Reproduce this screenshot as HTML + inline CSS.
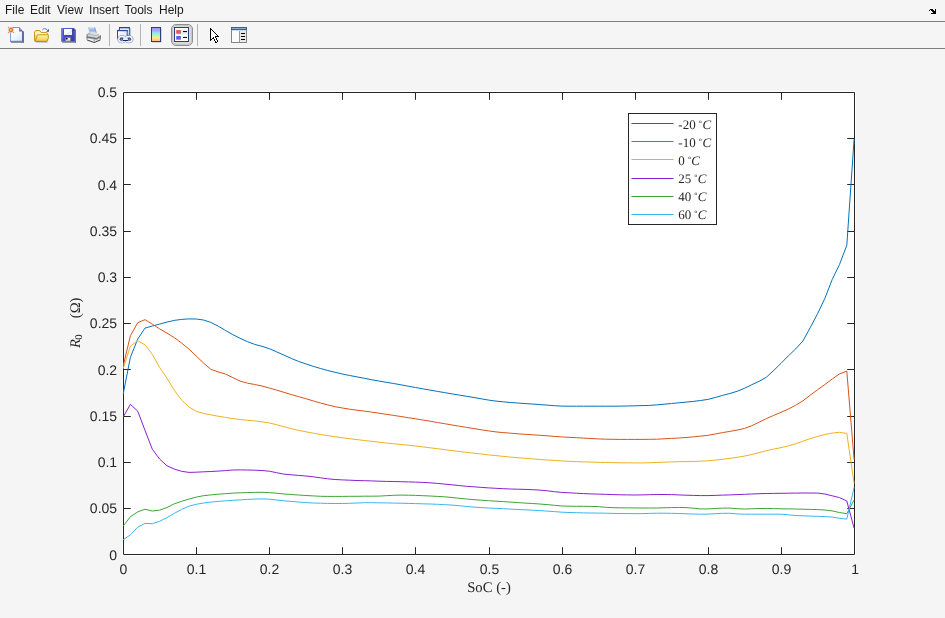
<!DOCTYPE html>
<html><head><meta charset="utf-8"><title>Figure 1</title>
<style>
html,body{margin:0;padding:0;background:#f5f5f5;}
body{width:945px;height:618px;overflow:hidden;position:relative;font-family:"Liberation Sans",sans-serif;}
svg{position:absolute;left:0;top:0;display:block;will-change:transform}
.m{font-family:"Liberation Sans",sans-serif;font-size:12px;fill:#1a1a1a}
.t{font-family:"Liberation Sans",sans-serif;font-size:14px;fill:#262626;text-rendering:geometricPrecision}
.s{font-family:"Liberation Serif",serif;fill:#262626;text-rendering:geometricPrecision}
</style></head><body>
<svg width="945" height="618" viewBox="0 0 945 618">
<rect x="0" y="0" width="945" height="618" fill="#f5f5f5"/>
<text class="m" x="5" y="13.8">File</text>
<text class="m" x="30" y="13.8">Edit</text>
<text class="m" x="57" y="13.8">View</text>
<text class="m" x="89.1" y="13.8">Insert</text>
<text class="m" x="124.5" y="13.8">Tools</text>
<text class="m" x="159" y="13.8">Help</text>
<path d="M930 9h1v1h-1zM931 9h1v1h-1zM932 9h1v1h-1zM935 9h1v1h-1zM929 10h1v1h-1zM931 10h1v1h-1zM932 10h1v1h-1zM933 10h1v1h-1zM935 10h1v1h-1zM932 11h1v1h-1zM933 11h1v1h-1zM934 11h1v1h-1zM935 11h1v1h-1zM933 12h1v1h-1zM934 12h1v1h-1zM935 12h1v1h-1zM931 13h1v1h-1zM932 13h1v1h-1zM933 13h1v1h-1zM934 13h1v1h-1zM935 13h1v1h-1z" fill="#000" shape-rendering="crispEdges"/>
<rect x="0" y="21" width="945" height="1" fill="#7e7e7e"/>
<rect x="0" y="48" width="945" height="1" fill="#7e7e7e"/>
<defs>
<linearGradient id="gPage" x1="0" y1="0" x2="1" y2="1"><stop offset="0" stop-color="#ffffff"/><stop offset="0.5" stop-color="#f4f8ff"/><stop offset="1" stop-color="#cfe0fb"/></linearGradient>
<linearGradient id="gFold" x1="0" y1="0" x2="0" y2="1"><stop offset="0" stop-color="#fff6c0"/><stop offset="0.45" stop-color="#fbe173"/><stop offset="1" stop-color="#f3c94a"/></linearGradient>
<linearGradient id="gFoldB" x1="0" y1="0" x2="0" y2="1"><stop offset="0" stop-color="#f8e08a"/><stop offset="0.3" stop-color="#fff6d2"/><stop offset="0.55" stop-color="#f6d862"/><stop offset="1" stop-color="#eec040"/></linearGradient>
<linearGradient id="gSave" x1="0" y1="0" x2="1" y2="1"><stop offset="0" stop-color="#7a7ae8"/><stop offset="0.5" stop-color="#4a49c4"/><stop offset="1" stop-color="#3a3aa0"/></linearGradient>
<linearGradient id="gLab" x1="0" y1="0" x2="1" y2="1"><stop offset="0" stop-color="#ffffff"/><stop offset="0.5" stop-color="#ffffff"/><stop offset="0.62" stop-color="#dfe3f4"/><stop offset="0.75" stop-color="#f6f7fc"/><stop offset="1" stop-color="#e3e6f5"/></linearGradient>
<linearGradient id="gCb" x1="0" y1="0" x2="0" y2="1"><stop offset="0" stop-color="#a394f2"/><stop offset="0.2" stop-color="#9cacf4"/><stop offset="0.42" stop-color="#92ecea"/><stop offset="0.58" stop-color="#c4f0b4"/><stop offset="0.72" stop-color="#f6f08a"/><stop offset="0.88" stop-color="#fbd08c"/><stop offset="1" stop-color="#fdae92"/></linearGradient>
<linearGradient id="gPap" x1="0" y1="0" x2="0" y2="1"><stop offset="0" stop-color="#e4edff"/><stop offset="0.2" stop-color="#b9d2fa"/><stop offset="0.6" stop-color="#8cb5f3"/><stop offset="1" stop-color="#c4dafb"/></linearGradient>
<linearGradient id="gPr" x1="0" y1="0" x2="0" y2="1"><stop offset="0" stop-color="#d8d8d8"/><stop offset="0.5" stop-color="#a8a8a8"/><stop offset="1" stop-color="#e8e8e8"/></linearGradient>
<linearGradient id="gWin" x1="0" y1="0" x2="1" y2="1"><stop offset="0" stop-color="#ffffff"/><stop offset="1" stop-color="#d5def2"/></linearGradient>
</defs>
<!-- new -->
<g>
<path d="M10 27H19.2L23 31V42H10Z" fill="url(#gPage)"/>
<rect x="10" y="27.6" width="1" height="14" fill="#80a3e3"/>
<rect x="12" y="27" width="7.4" height="1" fill="#6f9ae8"/>
<rect x="22" y="31" width="1" height="10.5" fill="#62659f"/>
<rect x="10" y="40.8" width="13" height="1" fill="#6a6aa8"/>
<rect x="23" y="31.3" width="1" height="11.4" fill="#5e7193"/>
<rect x="11" y="41.8" width="13" height="0.95" fill="#62728f"/>
<path d="M19.2 27L23.1 31.4H19.2Z" fill="#64679f"/>
<rect x="20" y="29" width="1.2" height="1.2" fill="#6f98e4"/>
<circle cx="11" cy="29.95" r="2.9" fill="#f3b999" opacity="0.8"/>
<circle cx="11" cy="29.95" r="2.2" fill="#e4733c"/>
<rect x="10.1" y="29.1" width="1.7" height="1.7" fill="#e9d94c"/>
<rect x="7.9" y="26.9" width="1" height="1" fill="#e4733c"/><rect x="13.1" y="26.9" width="1" height="1" fill="#e4733c"/>
<rect x="7.9" y="32.1" width="1" height="1" fill="#e4733c"/><rect x="13.1" y="32.1" width="1" height="1" fill="#e4733c"/>
</g>
<!-- open -->
<g>
<path d="M42.3 30C43.3 28.3 45.9 28.2 47.2 29.9" fill="none" stroke="#5f7fba" stroke-width="1"/>
<path d="M48.9 28.7V31.8H46.1Z" fill="#35518f"/>
<rect x="36" y="41.9" width="11.5" height="0.9" fill="#8c98ac" opacity="0.55"/>
<path d="M34.5 41V31.7L35.9 30.5H39.7L41.2 32.6H46.9L47.6 33.3V41Z" fill="url(#gFoldB)" stroke="#c8991f" stroke-width="1" stroke-linejoin="round"/>
<path d="M35.4 41.4L37.4 34.8H48.3V38.2L47 41.4Z" fill="url(#gFold)" stroke="#c99a1f" stroke-width="1" stroke-linejoin="round"/>
<path d="M35.4 41.45H47" stroke="#c08f14" stroke-width="1.1"/>
</g>
<!-- save -->
<g>
<rect x="62" y="41.4" width="14" height="1.3" fill="#50617f" opacity="0.85"/>
<rect x="74.9" y="29.4" width="1.1" height="13.3" fill="#50617f" opacity="0.85"/>
<path d="M61 28.1H74L74.9 29V41.4H61Z" fill="url(#gSave)"/>
<rect x="61" y="28.1" width="1.6" height="13.3" fill="#7e7eea" opacity="0.75"/>
<rect x="63.3" y="28.6" width="9.4" height="7.2" fill="#3b47b6"/>
<rect x="64" y="29" width="8" height="6" fill="url(#gLab)"/>
<rect x="65.1" y="37.2" width="5.5" height="3.8" fill="#77775e"/>
<rect x="65.8" y="37.8" width="4.4" height="2.9" fill="#e9ecf6"/>
<rect x="65.9" y="37.9" width="1.7" height="1.6" fill="#0c0c18"/>
<rect x="73.4" y="29.4" width="0.8" height="1.4" fill="#23235e"/>
</g>
<!-- print -->
<g>
<path d="M88.3 27L94.6 27.2L96.3 32.8H90Z" fill="url(#gPap)"/>
<path d="M94.6 27.2L96.3 32.8" stroke="#8f8f8f" stroke-width="0.8" fill="none"/>
<path d="M88.3 27.2L89.9 32.6" stroke="#a9b6dc" stroke-width="0.7" fill="none"/>
<path d="M86.9 34.6L89.8 32.9H97L100.4 35.3L96.5 37.2L86.9 35.8Z" fill="#dedede"/>
<path d="M88.5 34.4L96.3 35.6L98.8 34.4" stroke="#9c9c9c" stroke-width="0.7" fill="none"/>
<path d="M86.9 35.7L96.5 37.3L100.4 35.3V38.4L96.5 40.6L86.9 38.6Z" fill="#b4b4b4"/>
<path d="M87 36.9L96.5 38.7L100.3 36.8" stroke="#5c5c5c" stroke-width="0.9" fill="none"/>
<path d="M87.2 38.5L96.5 40.5L100.2 38.5V39.8L94.2 42.3L87.2 39.9Z" fill="#f8f8f8"/>
<path d="M87.2 39.9L94.2 42.4L100.2 39.9" stroke="#4a4a4a" stroke-width="1.1" fill="none"/>
<path d="M87 34.4V39.6M100.4 35.3V39.6" stroke="#6a6a6a" stroke-width="0.9" fill="none"/><path d="M87 34.6L89.8 32.9" stroke="#7a7a7a" stroke-width="0.7"/>
<rect x="98" y="36.5" width="1" height="1.2" fill="#44b044"/>
<rect x="93.6" y="40.2" width="1.3" height="0.9" fill="#6c82d8"/>
</g>
<!-- sep -->
<rect x="109" y="24" width="1" height="22" fill="#b4b4b4"/>
<rect x="140" y="24" width="1" height="22" fill="#b4b4b4"/>
<rect x="197" y="24" width="1" height="22" fill="#b4b4b4"/>
<!-- link -->
<g>
<rect x="119.5" y="27.6" width="9.8" height="7.7" fill="#ffffff" stroke="#2f4b9b" stroke-width="1"/>
<rect x="119" y="27" width="10.8" height="1.3" fill="#2a4694"/>
<rect x="130" y="28.2" width="0.8" height="7.6" fill="#7d8aa8" opacity="0.6"/>
<rect x="117.5" y="30.5" width="9.7" height="8" fill="url(#gWin)" stroke="#2f4b9b" stroke-width="1"/>
<rect x="117" y="29.9" width="10.7" height="1.3" fill="#2a4694"/>
<ellipse cx="121.9" cy="39.2" rx="3.2" ry="2.7" fill="none" stroke="#7488b2" stroke-width="2.7"/>
<ellipse cx="128.9" cy="39.2" rx="3.2" ry="2.7" fill="none" stroke="#7488b2" stroke-width="2.7"/>
<ellipse cx="121.9" cy="39.2" rx="3.2" ry="2.7" fill="none" stroke="#f0f4fb" stroke-width="1.5"/>
<ellipse cx="128.9" cy="39.2" rx="3.2" ry="2.7" fill="none" stroke="#f0f4fb" stroke-width="1.5"/>
<ellipse cx="121.6" cy="39.1" rx="1.5" ry="0.9" fill="#c5d2ea" stroke="#22346a" stroke-width="1"/>
<ellipse cx="129.2" cy="39.1" rx="1.5" ry="0.9" fill="#c5d2ea" stroke="#22346a" stroke-width="1"/>
<rect x="123" y="38.3" width="4.9" height="1.7" fill="#e6edf8"/>
<rect x="122.9" y="40" width="5" height="1" fill="#182858"/>
</g>
<!-- colorbar -->
<g>
<rect x="152.3" y="28.3" width="9.4" height="14.4" fill="#9aa0b4" opacity="0.55"/>
<rect x="151.5" y="27.5" width="9" height="14" fill="url(#gCb)" stroke="#2b3f7d" stroke-width="1"/>
</g>
<!-- legend pressed -->
<g>
<rect x="171.5" y="24.5" width="21" height="21" rx="4.5" ry="4.5" fill="#dadada" stroke="#8e8e8e" stroke-width="1"/>
<rect x="172.5" y="25.5" width="19" height="19" rx="3.6" ry="3.6" fill="none" stroke="#c6c6c6" stroke-width="1"/>
<rect x="174.5" y="27.5" width="14" height="14" fill="#ffffff" stroke="#2b3f7d" stroke-width="1"/>
<rect x="175" y="29.6" width="13" height="5" fill="#e8eef9"/>
<rect x="176.2" y="30.1" width="4.7" height="3.7" fill="#e85a5a"/>
<rect x="176.2" y="36" width="4.7" height="3.7" fill="#6262e2"/>
<rect x="183" y="31" width="4" height="1.1" fill="#111"/>
<rect x="183" y="36.9" width="4" height="1.1" fill="#111"/>
</g>
<!-- cursor -->
<g shape-rendering="crispEdges">
<path d="M211 30h1v1h-1zM211 31h2v1h-2zM211 32h3v1h-3zM211 33h4v1h-4zM211 34h5v1h-5zM211 35h6v1h-6zM211 36h4v1h-4zM211 37h2v1h-2zM214 37h1v1h-1zM211 38h1v1h-1zM214 38h2v1h-2zM215 39h1v1h-1zM215 40h2v1h-2zM216 41h1v1h-1z" fill="#ffffff"/>
<path d="M210 28h1v1h-1zM210 29h2v1h-2zM210 30h1v1h-1zM212 30h1v1h-1zM210 31h1v1h-1zM213 31h1v1h-1zM210 32h1v1h-1zM214 32h1v1h-1zM210 33h1v1h-1zM215 33h1v1h-1zM210 34h1v1h-1zM216 34h1v1h-1zM210 35h1v1h-1zM217 35h1v1h-1zM210 36h1v1h-1zM215 36h4v1h-4zM210 37h1v1h-1zM213 37h1v1h-1zM215 37h1v1h-1zM210 38h1v1h-1zM212 38h2v1h-2zM216 38h1v1h-1zM210 39h2v1h-2zM214 39h1v1h-1zM216 39h1v1h-1zM210 40h1v1h-1zM214 40h1v1h-1zM217 40h1v1h-1zM215 41h1v1h-1zM217 41h1v1h-1zM215 42h2v1h-2z" fill="#000000"/>
</g>
<!-- inspector -->
<g shape-rendering="crispEdges">
<rect x="231" y="27" width="16" height="16" fill="#858585"/>
<rect x="232" y="30" width="7" height="12" fill="#fbfcfd"/>
<rect x="240" y="30" width="6" height="12" fill="#e9eaec"/>
<rect x="239" y="30" width="1" height="12" fill="#969696"/>
<rect x="231" y="27" width="16" height="3" fill="#38628f"/>
<rect x="232" y="28" width="14" height="1" fill="#86abd2"/>
<rect x="232" y="30" width="14" height="1" fill="#c9ddf0"/>
<rect x="241" y="33" width="4" height="1" fill="#000"/>
<rect x="241" y="36" width="4" height="1" fill="#000"/>
<rect x="241" y="39" width="4" height="1" fill="#000"/>
</g>
<rect x="122" y="91" width="734" height="465" fill="#fff" stroke="none"/>
<path d="M123.5 92.5H854.5V554.5H123.5ZM196.5 554.5v-7.3M196.5 92.5v7.3M269.5 554.5v-7.3M269.5 92.5v7.3M342.5 554.5v-7.3M342.5 92.5v7.3M415.5 554.5v-7.3M415.5 92.5v7.3M489.5 554.5v-7.3M489.5 92.5v7.3M562.5 554.5v-7.3M562.5 92.5v7.3M635.5 554.5v-7.3M635.5 92.5v7.3M708.5 554.5v-7.3M708.5 92.5v7.3M781.5 554.5v-7.3M781.5 92.5v7.3M123.5 508.5h7.3M854.5 508.5h-7.3M123.5 462.5h7.3M854.5 462.5h-7.3M123.5 416.5h7.3M854.5 416.5h-7.3M123.5 369.5h7.3M854.5 369.5h-7.3M123.5 323.5h7.3M854.5 323.5h-7.3M123.5 277.5h7.3M854.5 277.5h-7.3M123.5 231.5h7.3M854.5 231.5h-7.3M123.5 184.5h7.3M854.5 184.5h-7.3M123.5 138.5h7.3M854.5 138.5h-7.3" fill="none" stroke="#262626" stroke-width="1"/>
<clipPath id="cp"><rect x="122.5" y="91.5" width="733.0" height="464.0"/></clipPath>
<g clip-path="url(#cp)" fill="none" stroke-width="1" stroke-linejoin="round">
<polyline stroke="#0072bd" points="123.1,394.5 130.4,357.3 137.7,339.1 145.0,328.1 152.3,326.0 159.6,324.1 167.0,322.1 174.3,320.4 181.6,319.4 188.9,318.9 196.2,319.0 203.5,320.0 210.8,322.4 218.1,326.1 225.4,330.4 232.8,334.6 240.1,338.3 247.4,341.6 254.7,344.4 262.0,346.3 269.3,348.7 276.6,351.8 283.9,355.1 291.2,358.4 298.5,361.4 305.9,363.9 313.2,366.3 320.5,368.5 327.8,370.5 335.1,372.3 342.4,374.0 349.7,375.5 357.0,376.9 364.3,378.3 371.6,379.7 378.9,381.0 386.3,382.3 393.6,383.5 400.9,384.8 408.2,386.2 415.5,387.5 422.8,388.8 430.1,390.1 437.4,391.4 444.7,392.6 452.0,393.9 459.4,395.1 466.7,396.3 474.0,397.5 481.3,398.8 488.6,400.1 495.9,401.1 503.2,401.8 510.5,402.5 517.8,403.0 525.1,403.6 532.5,404.0 539.8,404.6 547.1,405.1 554.4,405.7 561.7,406.1 569.0,406.2 576.3,406.2 583.6,406.2 590.9,406.2 598.2,406.2 605.6,406.2 612.9,406.2 620.2,406.1 627.5,406.0 634.8,405.8 642.1,405.6 649.4,405.4 656.7,404.9 664.0,404.2 671.4,403.5 678.7,402.8 686.0,402.1 693.3,401.4 700.6,400.5 707.9,399.4 715.2,397.5 722.5,395.4 729.8,393.5 737.1,391.3 744.5,388.3 751.8,384.7 759.1,381.3 766.4,377.2 773.7,370.5 781.0,363.3 788.3,355.9 795.6,349.0 802.9,341.0 810.2,327.7 817.6,313.7 824.9,298.3 832.2,279.6 839.5,264.5 846.8,245.3 854.1,139.2"/>
<polyline stroke="#d95319" points="123.1,366.2 130.4,335.8 137.7,322.7 145.0,319.7 152.3,324.1 159.6,328.9 167.0,333.1 174.3,337.7 181.6,343.0 188.9,349.0 196.2,356.0 203.5,363.0 210.8,369.3 218.1,371.9 225.4,374.0 232.8,377.6 240.1,381.1 247.4,383.1 254.7,384.5 262.0,386.0 269.3,388.0 276.6,390.1 283.9,392.3 291.2,394.5 298.5,396.6 305.9,398.7 313.2,400.9 320.5,403.0 327.8,404.9 335.1,406.7 342.4,408.0 349.7,409.2 357.0,410.2 364.3,411.1 371.6,412.1 378.9,413.2 386.3,414.3 393.6,415.4 400.9,416.5 408.2,417.7 415.5,418.8 422.8,420.0 430.1,421.2 437.4,422.5 444.7,423.7 452.0,425.0 459.4,426.2 466.7,427.4 474.0,428.6 481.3,429.8 488.6,430.9 495.9,431.9 503.2,432.6 510.5,433.2 517.8,433.8 525.1,434.3 532.5,434.8 539.8,435.3 547.1,435.8 554.4,436.4 561.7,436.9 569.0,437.3 576.3,437.7 583.6,438.1 590.9,438.5 598.2,438.9 605.6,439.2 612.9,439.3 620.2,439.4 627.5,439.4 634.8,439.4 642.1,439.4 649.4,439.3 656.7,439.2 664.0,438.8 671.4,438.4 678.7,438.0 686.0,437.5 693.3,436.9 700.6,436.1 707.9,435.3 715.2,434.0 722.5,432.6 729.8,431.4 737.1,430.1 744.5,428.4 751.8,425.7 759.1,422.2 766.4,418.6 773.7,415.4 781.0,412.3 788.3,409.0 795.6,405.3 802.9,400.9 810.2,395.2 817.6,389.7 824.9,384.5 832.2,379.0 839.5,373.9 846.8,371.2 854.1,459.6"/>
<polyline stroke="#edb120" points="123.1,368.8 130.4,346.2 137.7,340.7 145.0,344.8 152.3,354.4 159.6,367.4 167.0,378.3 174.3,390.3 181.6,400.1 188.9,406.9 196.2,411.3 203.5,413.4 210.8,414.9 218.1,416.2 225.4,417.4 232.8,418.6 240.1,419.5 247.4,420.3 254.7,420.9 262.0,421.8 269.3,423.0 276.6,424.7 283.9,426.7 291.2,428.6 298.5,430.4 305.9,431.8 313.2,433.2 320.5,434.5 327.8,435.6 335.1,436.7 342.4,437.8 349.7,438.7 357.0,439.6 364.3,440.5 371.6,441.3 378.9,442.2 386.3,443.0 393.6,443.7 400.9,444.5 408.2,445.2 415.5,446.0 422.8,446.9 430.1,447.8 437.4,448.7 444.7,449.6 452.0,450.6 459.4,451.5 466.7,452.4 474.0,453.2 481.3,454.0 488.6,454.9 495.9,455.6 503.2,456.4 510.5,457.1 517.8,457.7 525.1,458.3 532.5,458.9 539.8,459.5 547.1,460.0 554.4,460.4 561.7,460.9 569.0,461.3 576.3,461.6 583.6,461.9 590.9,462.1 598.2,462.3 605.6,462.5 612.9,462.6 620.2,462.8 627.5,462.8 634.8,462.9 642.1,462.9 649.4,462.7 656.7,462.5 664.0,462.2 671.4,461.9 678.7,461.7 686.0,461.6 693.3,461.4 700.6,461.2 707.9,460.8 715.2,460.1 722.5,459.3 729.8,458.4 737.1,457.3 744.5,456.1 751.8,454.5 759.1,452.6 766.4,450.7 773.7,449.1 781.0,447.6 788.3,445.9 795.6,443.8 802.9,441.2 810.2,438.6 817.6,436.5 824.9,434.5 832.2,433.1 839.5,432.3 846.8,433.5 854.1,483.2"/>
<polyline stroke="#8a1fd3" points="123.1,417.2 130.4,404.3 137.7,411.1 145.0,430.4 152.3,449.2 159.6,459.0 167.0,465.8 174.3,469.1 181.6,471.3 188.9,472.4 196.2,472.2 203.5,471.8 210.8,471.5 218.1,471.1 225.4,470.6 232.8,470.0 240.1,469.9 247.4,470.0 254.7,470.2 262.0,470.5 269.3,471.2 276.6,472.7 283.9,474.1 291.2,474.8 298.5,475.4 305.9,476.0 313.2,476.8 320.5,477.8 327.8,478.8 335.1,479.5 342.4,479.9 349.7,480.2 357.0,480.5 364.3,480.7 371.6,480.9 378.9,481.2 386.3,481.4 393.6,481.5 400.9,481.7 408.2,481.9 415.5,482.1 422.8,482.4 430.1,482.8 437.4,483.4 444.7,484.1 452.0,484.8 459.4,485.6 466.7,486.3 474.0,486.8 481.3,487.4 488.6,487.9 495.9,488.3 503.2,488.7 510.5,489.0 517.8,489.2 525.1,489.4 532.5,489.7 539.8,490.1 547.1,490.8 554.4,491.7 561.7,492.4 569.0,492.8 576.3,493.2 583.6,493.6 590.9,493.9 598.2,494.1 605.6,494.3 612.9,494.6 620.2,494.8 627.5,494.9 634.8,495.0 642.1,494.9 649.4,494.7 656.7,494.5 664.0,494.5 671.4,494.6 678.7,494.9 686.0,495.2 693.3,495.4 700.6,495.6 707.9,495.6 715.2,495.4 722.5,495.1 729.8,494.9 737.1,494.6 744.5,494.3 751.8,494.0 759.1,493.7 766.4,493.5 773.7,493.4 781.0,493.3 788.3,493.2 795.6,493.1 802.9,493.0 810.2,493.0 817.6,493.1 824.9,494.0 832.2,495.8 839.5,497.6 846.8,501.0 854.1,528.2"/>
<polyline stroke="#3da533" points="123.1,526.2 130.4,516.7 137.7,511.9 145.0,509.2 152.3,511.0 159.6,510.2 167.0,507.5 174.3,503.8 181.6,501.3 188.9,499.1 196.2,497.1 203.5,495.7 210.8,494.9 218.1,494.2 225.4,493.7 232.8,493.1 240.1,492.8 247.4,492.6 254.7,492.4 262.0,492.3 269.3,492.6 276.6,493.2 283.9,494.0 291.2,494.5 298.5,495.0 305.9,495.5 313.2,495.9 320.5,496.3 327.8,496.4 335.1,496.4 342.4,496.4 349.7,496.3 357.0,496.3 364.3,496.2 371.6,496.2 378.9,496.1 386.3,495.7 393.6,495.3 400.9,495.1 408.2,495.2 415.5,495.4 422.8,495.7 430.1,496.0 437.4,496.4 444.7,496.8 452.0,497.5 459.4,498.3 466.7,499.0 474.0,499.7 481.3,500.2 488.6,500.7 495.9,501.2 503.2,501.6 510.5,502.1 517.8,502.6 525.1,503.1 532.5,503.5 539.8,504.0 547.1,504.6 554.4,505.3 561.7,506.0 569.0,506.2 576.3,506.3 583.6,506.3 590.9,506.4 598.2,506.6 605.6,507.3 612.9,507.7 620.2,507.8 627.5,507.9 634.8,507.9 642.1,508.0 649.4,508.0 656.7,508.0 664.0,507.8 671.4,507.6 678.7,507.5 686.0,507.6 693.3,508.2 700.6,508.9 707.9,508.9 715.2,508.5 722.5,508.1 729.8,508.1 737.1,508.7 744.5,509.0 751.8,508.8 759.1,508.5 766.4,508.5 773.7,508.6 781.0,508.8 788.3,508.9 795.6,509.0 802.9,509.2 810.2,509.4 817.6,509.6 824.9,510.0 832.2,510.9 839.5,512.5 846.8,513.7 854.1,499.9"/>
<polyline stroke="#35b8ee" points="123.1,539.8 130.4,534.9 137.7,527.2 145.0,523.4 152.3,523.7 159.6,521.3 167.0,517.6 174.3,513.4 181.6,509.4 188.9,506.2 196.2,504.3 203.5,503.0 210.8,502.1 218.1,501.4 225.4,500.8 232.8,500.3 240.1,499.9 247.4,499.4 254.7,499.1 262.0,498.9 269.3,499.2 276.6,500.0 283.9,500.8 291.2,501.4 298.5,502.0 305.9,502.6 313.2,503.0 320.5,503.2 327.8,503.4 335.1,503.5 342.4,503.5 349.7,503.3 357.0,503.0 364.3,502.7 371.6,502.7 378.9,502.8 386.3,502.9 393.6,503.1 400.9,503.2 408.2,503.4 415.5,503.6 422.8,503.8 430.1,504.0 437.4,504.3 444.7,504.7 452.0,505.1 459.4,505.7 466.7,506.5 474.0,507.1 481.3,507.6 488.6,508.0 495.9,508.3 503.2,508.7 510.5,509.1 517.8,509.5 525.1,509.8 532.5,510.2 539.8,510.6 547.1,511.1 554.4,511.6 561.7,512.2 569.0,512.5 576.3,512.7 583.6,512.9 590.9,513.0 598.2,513.1 605.6,513.2 612.9,513.4 620.2,513.5 627.5,513.6 634.8,513.7 642.1,513.6 649.4,513.4 656.7,513.2 664.0,513.2 671.4,513.3 678.7,513.5 686.0,513.8 693.3,514.0 700.6,514.2 707.9,514.1 715.2,513.7 722.5,513.3 729.8,513.3 737.1,513.9 744.5,514.2 751.8,514.2 759.1,514.2 766.4,514.2 773.7,514.2 781.0,514.2 788.3,514.8 795.6,515.5 802.9,515.8 810.2,516.1 817.6,516.3 824.9,516.6 832.2,517.1 839.5,518.3 846.8,519.1 854.1,487.4"/>
</g>
<text class="t" text-anchor="middle" x="123.50" y="573.85">0</text>
<text class="t" text-anchor="middle" x="196.50" y="573.85">0.1</text>
<text class="t" text-anchor="middle" x="269.50" y="573.85">0.2</text>
<text class="t" text-anchor="middle" x="342.50" y="573.85">0.3</text>
<text class="t" text-anchor="middle" x="415.50" y="573.85">0.4</text>
<text class="t" text-anchor="middle" x="489.50" y="573.85">0.5</text>
<text class="t" text-anchor="middle" x="562.50" y="573.85">0.6</text>
<text class="t" text-anchor="middle" x="635.50" y="573.85">0.7</text>
<text class="t" text-anchor="middle" x="708.50" y="573.85">0.8</text>
<text class="t" text-anchor="middle" x="781.50" y="573.85">0.9</text>
<text class="t" text-anchor="middle" x="855.20" y="573.85">1</text>
<text class="t" text-anchor="end" x="117.1" y="559.50">0</text>
<text class="t" text-anchor="end" x="117.1" y="513.25">0.05</text>
<text class="t" text-anchor="end" x="117.1" y="467.00">0.1</text>
<text class="t" text-anchor="end" x="117.1" y="420.75">0.15</text>
<text class="t" text-anchor="end" x="117.1" y="374.50">0.2</text>
<text class="t" text-anchor="end" x="117.1" y="328.25">0.25</text>
<text class="t" text-anchor="end" x="117.1" y="282.00">0.3</text>
<text class="t" text-anchor="end" x="117.1" y="235.75">0.35</text>
<text class="t" text-anchor="end" x="117.1" y="189.50">0.4</text>
<text class="t" text-anchor="end" x="117.1" y="143.25">0.45</text>
<text class="t" text-anchor="end" x="117.1" y="97.00">0.5</text>
<text class="s" font-size="14.67" text-anchor="middle" x="489" y="591.7">SoC (-)</text>
<g transform="translate(80 348) rotate(-90)"><text class="s" font-size="14.67" x="0" y="0"><tspan font-style="italic">R</tspan><tspan font-size="10.6" dy="1.7" dx="-0.7">0</tspan><tspan dy="-1.7" x="29.8">(Ω)</tspan></text></g>
<rect x="628.5" y="113.5" width="88" height="111" fill="#fff" stroke="#262626" stroke-width="1"/>
<line x1="631.5" x2="673.5" y1="123.5" y2="123.5" stroke="#0072bd" stroke-width="1"/>
<text class="s" font-size="13.0" x="678.3" y="129.0">-20</text><text class="s" font-size="8.0" font-weight="bold" x="698.80" y="125.90">°</text><text class="s" font-size="13.0" font-style="italic" x="702.4000000000001" y="129.0">C</text>
<line x1="631.5" x2="673.5" y1="141.5" y2="141.5" stroke="#d95319" stroke-width="1"/>
<text class="s" font-size="13.0" x="678.3" y="147.0">-10</text><text class="s" font-size="8.0" font-weight="bold" x="698.80" y="143.90">°</text><text class="s" font-size="13.0" font-style="italic" x="702.4000000000001" y="147.0">C</text>
<line x1="631.5" x2="673.5" y1="159.5" y2="159.5" stroke="#edb120" stroke-width="1"/>
<text class="s" font-size="13.0" x="678.3" y="165.0">0</text><text class="s" font-size="8.0" font-weight="bold" x="688.00" y="161.90">°</text><text class="s" font-size="13.0" font-style="italic" x="691.3000000000001" y="165.0">C</text>
<line x1="631.5" x2="673.5" y1="178.5" y2="178.5" stroke="#8a1fd3" stroke-width="1"/>
<text class="s" font-size="13.0" x="678.3" y="183.0">25</text><text class="s" font-size="8.0" font-weight="bold" x="694.30" y="179.90">°</text><text class="s" font-size="13.0" font-style="italic" x="697.7" y="183.0">C</text>
<line x1="631.5" x2="673.5" y1="196.5" y2="196.5" stroke="#3da533" stroke-width="1"/>
<text class="s" font-size="13.0" x="678.3" y="201.0">40</text><text class="s" font-size="8.0" font-weight="bold" x="694.30" y="197.90">°</text><text class="s" font-size="13.0" font-style="italic" x="697.7" y="201.0">C</text>
<line x1="631.5" x2="673.5" y1="214.5" y2="214.5" stroke="#35b8ee" stroke-width="1"/>
<text class="s" font-size="13.0" x="678.3" y="219.0">60</text><text class="s" font-size="8.0" font-weight="bold" x="694.30" y="215.90">°</text><text class="s" font-size="13.0" font-style="italic" x="697.7" y="219.0">C</text>
</svg>
</body></html>
